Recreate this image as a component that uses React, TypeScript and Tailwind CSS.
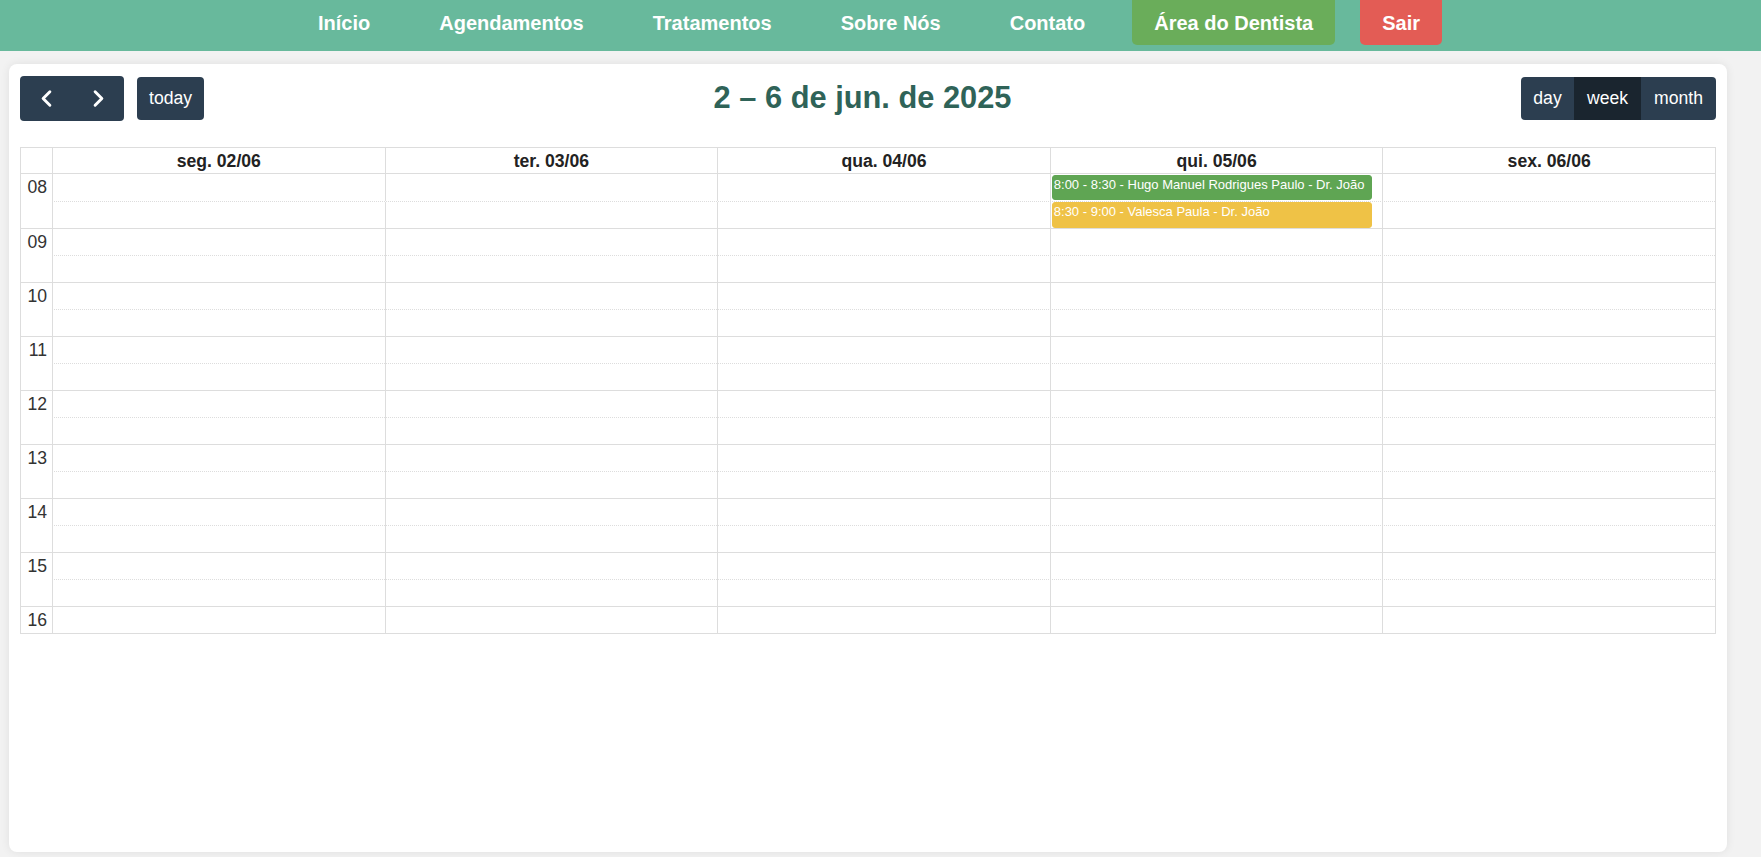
import React from "react";
import { ChevronLeft, ChevronRight } from "lucide-react";

const navLinks = ["Início", "Agendamentos", "Tratamentos", "Sobre Nós", "Contato"];

const days = ["seg. 02/06", "ter. 03/06", "qua. 04/06", "qui. 05/06", "sex. 06/06"];

type Slot = { label: string; hour: boolean };

const slots: Slot[] = [];
for (let h = 8; h <= 16; h++) {
  slots.push({ label: String(h).padStart(2, "0"), hour: true });
  if (h < 16) slots.push({ label: "", hour: false });
}

type CalEvent = { slot: number; day: number; title: string; color: string };

const events: CalEvent[] = [
  {
    slot: 0,
    day: 3,
    title: "8:00 - 8:30 - Hugo Manuel Rodrigues Paulo - Dr. João",
    color: "bg-[#5fa553] border-[#5fa553] top-[1px] bottom-[1px]",
  },
  {
    slot: 1,
    day: 3,
    title: "8:30 - 9:00 - Valesca Paula - Dr. João",
    color: "bg-[#efc246] border-[#efc246] top-0 bottom-0",
  },
];

const DayCells: React.FC<{ slotIndex: number }> = ({ slotIndex }) => (
  <div className="grid grid-cols-5 h-full">
    {days.map((d, di) => {
      const ev = events.find((e) => e.slot === slotIndex && e.day === di);
      return (
        <div key={d} className="relative border-l border-[#ddd]">
          {ev && (
            <div
              className={`absolute left-[1px] right-[10px] rounded-[3px] border px-[1px] pt-[1px] text-[13px] leading-[15px] text-white whitespace-nowrap overflow-hidden ${ev.color}`}
            >
              {ev.title}
            </div>
          )}
        </div>
      );
    })}
  </div>
);

export default function App() {
  return (
    <div className="min-h-[857px] bg-[#f2f2f2] font-['Liberation_Sans',Arial,sans-serif] pb-[5px]">
      <header className="h-[51px] bg-[#68b99c] flex justify-center gap-[25px] pr-[23px]">
        {navLinks.map((l) => (
          <a key={l} className="h-[45px] px-[22px] flex items-center text-white font-bold text-[20px]">
            {l}
          </a>
        ))}
        <a className="h-[45px] px-[22px] flex items-center text-white font-bold text-[20px] bg-[#6aad5a] rounded-b-[5px]">
          Área do Dentista
        </a>
        <a className="h-[45px] px-[22px] flex items-center text-white font-bold text-[20px] bg-[#e35c55] rounded-b-[5px]">
          Sair
        </a>
      </header>

      <main className="ml-[9px] mt-[13px] w-[1718px] h-[788px] bg-white rounded-[8px] shadow-[0_0_10px_rgba(0,0,0,0.08)] p-[11px]">
        <div className="flex items-center justify-between mb-[26px]">
          <div className="flex items-center gap-[13px]">
            <div className="flex rounded-[4px] overflow-hidden">
              <button className="w-[52px] h-[45px] bg-[#2c3e50] flex items-center justify-center text-white">
                <ChevronLeft size={27} strokeWidth={2.6} />
              </button>
              <button className="w-[52px] h-[45px] bg-[#2c3e50] flex items-center justify-center text-white">
                <ChevronRight size={27} strokeWidth={2.6} />
              </button>
            </div>
            <button className="h-[43px] px-[12px] bg-[#2c3e50] rounded-[4px] text-white text-[17.6px]">
              today
            </button>
          </div>
          <h2 className="text-[30.8px] font-bold text-[#2f6358]">2 – 6 de jun. de 2025</h2>
          <div className="flex rounded-[4px] overflow-hidden text-white text-[17.6px]">
            <button className="h-[43px] w-[53px] bg-[#2c3e50]">day</button>
            <button className="h-[43px] w-[67px] bg-[#1a252f]">week</button>
            <button className="h-[43px] w-[75px] bg-[#2c3e50]">month</button>
          </div>
        </div>

        <div className="border border-[#ddd] text-[17.6px]">
          <div className="grid grid-cols-[31px_1fr] h-[26px] border-b border-[#ddd]">
            <div />
            <div className="grid grid-cols-5">
              {days.map((d) => (
                <div key={d} className="border-l border-[#ddd] flex items-center justify-center font-bold text-[#222]">
                  {d}
                </div>
              ))}
            </div>
          </div>
          {slots.map((s, i) => (
            <div
              key={i}
              className={`grid grid-cols-[31px_1fr] h-[27px] ${s.hour && i > 0 ? "border-t border-[#ddd]" : ""}`}
            >
              <div className="flex items-center justify-end pr-[5px] text-[#333]">{s.label}</div>
              {s.hour ? (
                <DayCells slotIndex={i} />
              ) : (
                <div className="border-t border-dotted border-[#ddd]">
                  <DayCells slotIndex={i} />
                </div>
              )}
            </div>
          ))}
        </div>
      </main>
    </div>
  );
}
